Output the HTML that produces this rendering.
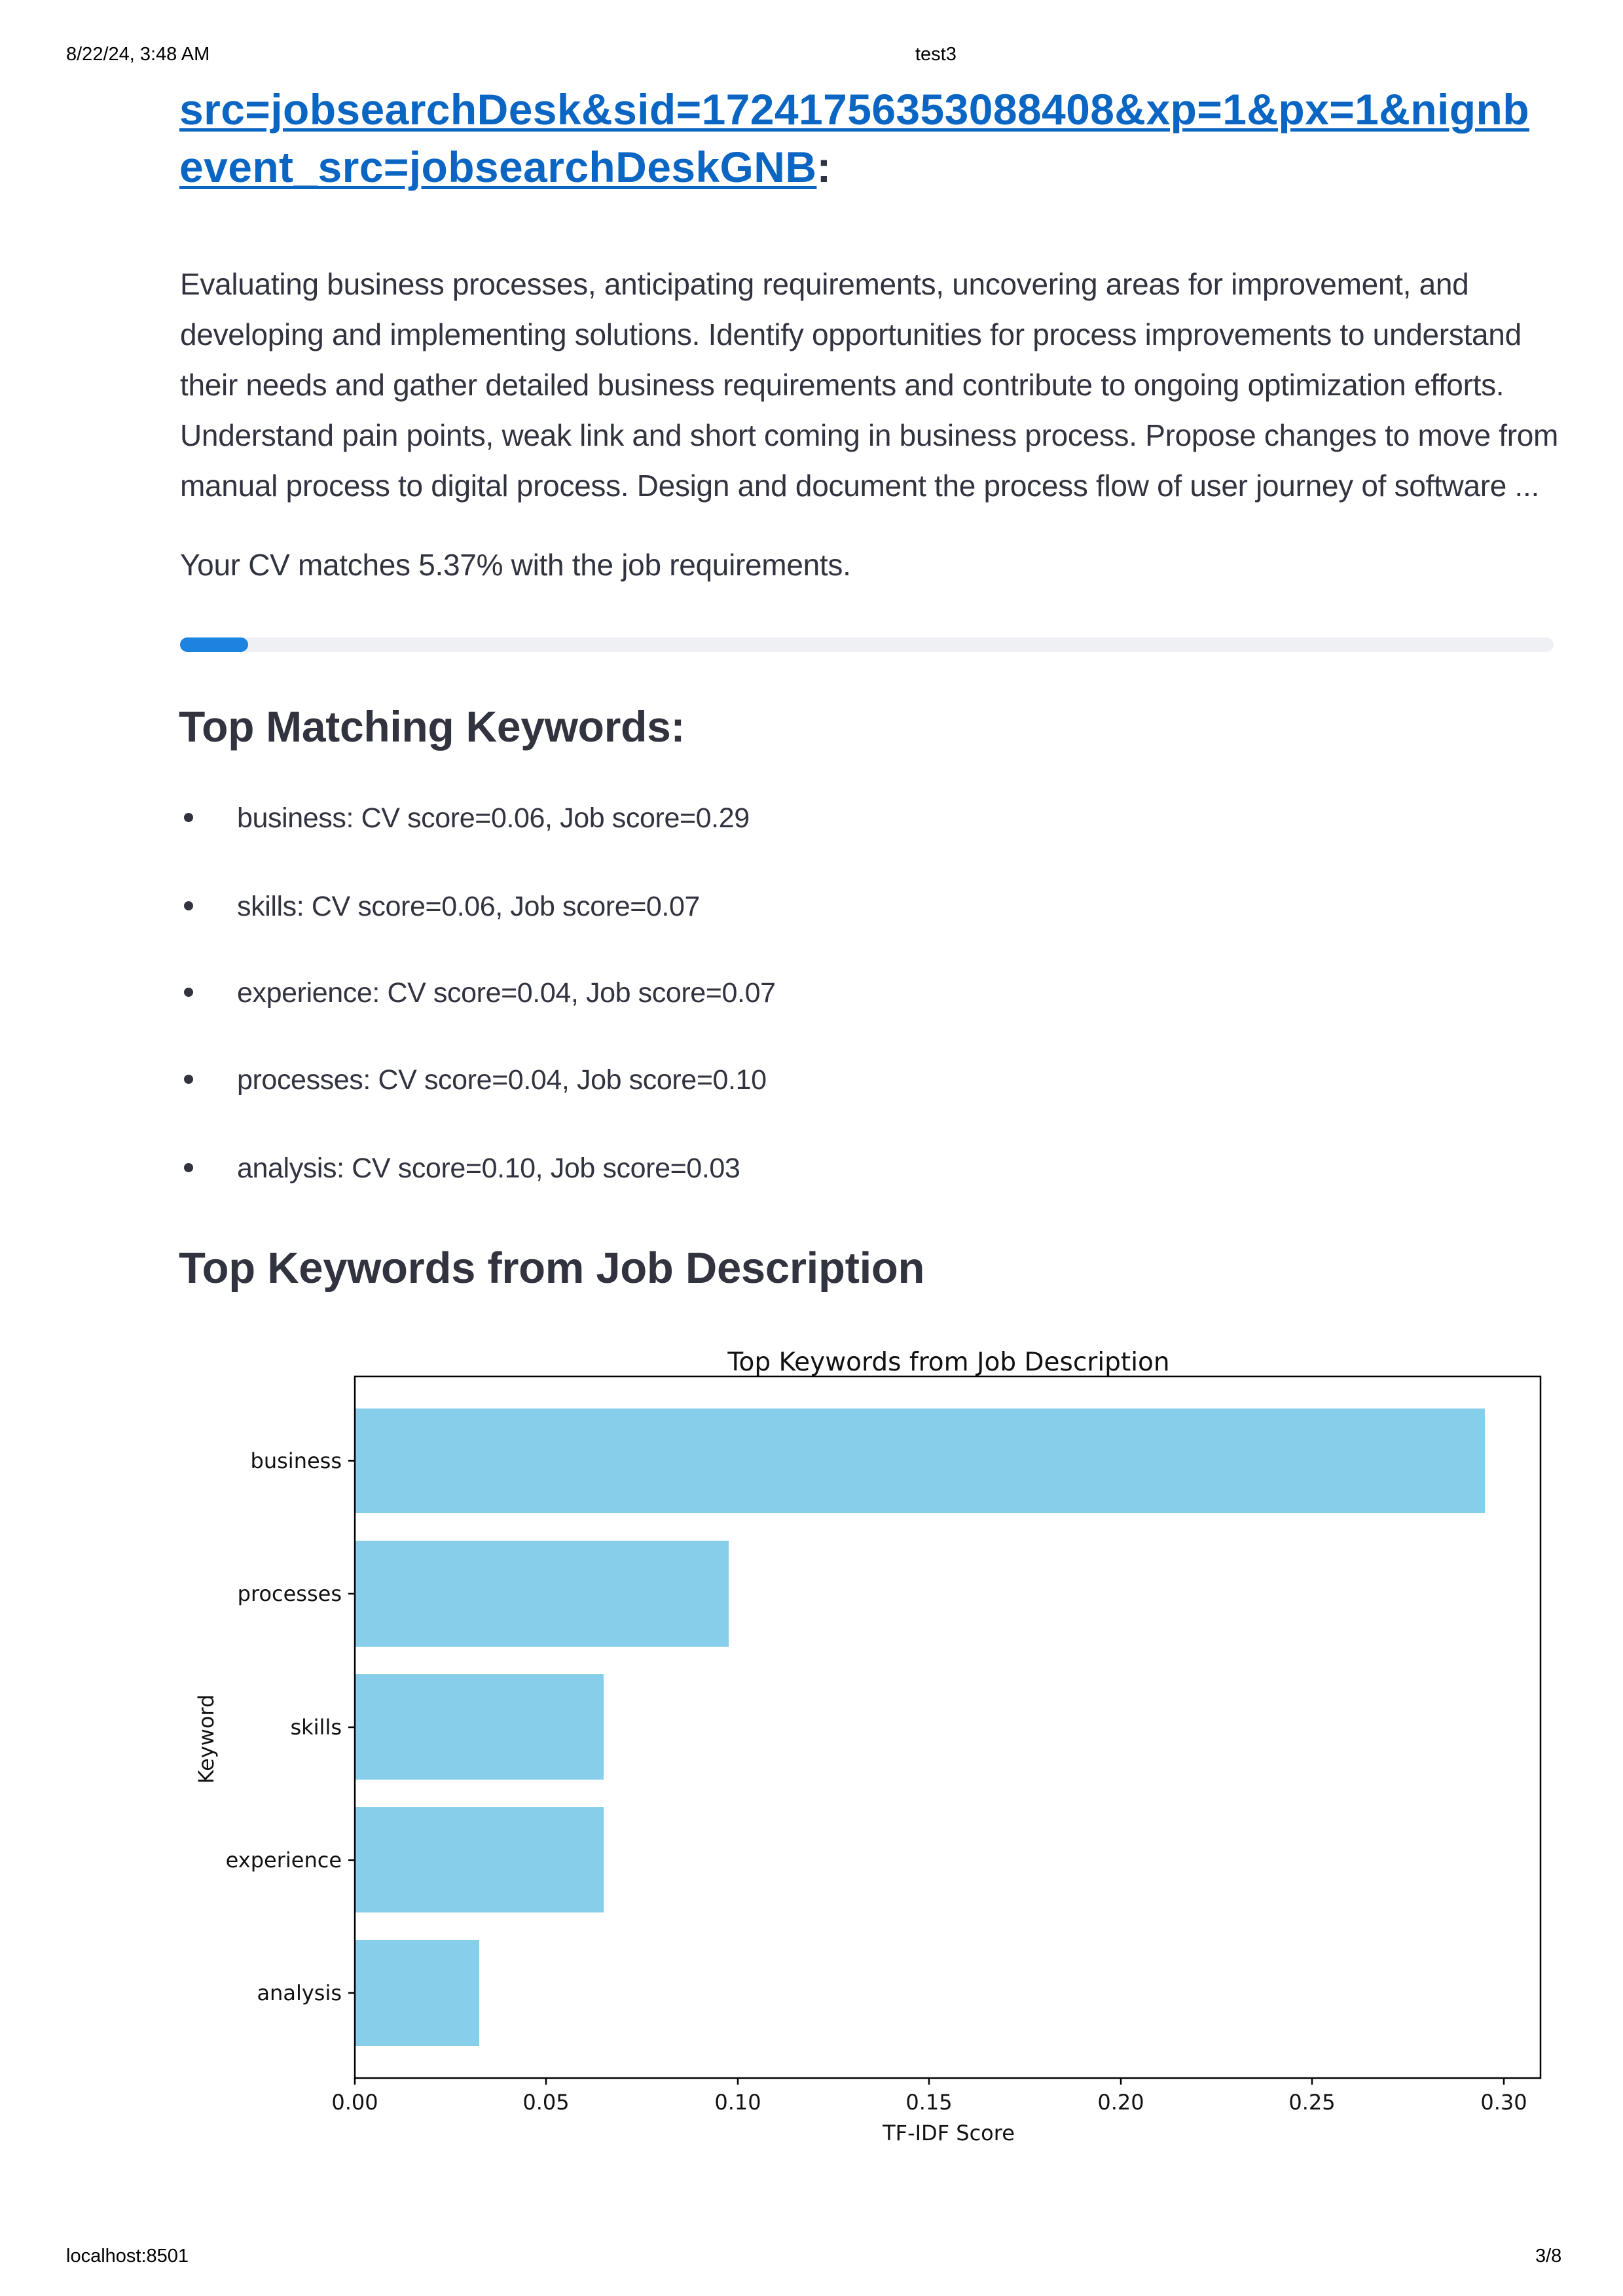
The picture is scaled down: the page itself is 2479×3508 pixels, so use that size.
<!DOCTYPE html>
<html><head><meta charset="utf-8">
<style>
html,body{margin:0;padding:0;background:#fff;}
body{width:2479px;height:3508px;position:relative;overflow:hidden;font-family:"Liberation Sans",sans-serif;color:#31333f;}
.a{position:absolute;white-space:nowrap;}
.hdr{font-size:29px;color:#000;line-height:34px;}
.link{font-size:66px;font-weight:bold;line-height:90px;color:#0b66c3;left:274px;letter-spacing:0.4px;}
.link u{text-decoration-thickness:5px;text-underline-offset:6px;}
.p{font-size:46px;line-height:77px;left:275px;letter-spacing:-0.3px;}
.h{font-size:66px;font-weight:bold;line-height:80px;left:273px;color:#31333f;letter-spacing:-0.3px;}
.li{font-size:43px;line-height:60px;left:362px;letter-spacing:-0.4px;}
.dot{position:absolute;left:281px;width:14px;height:14px;border-radius:50%;background:#31333f;}
</style></head><body>
<div class="a hdr" style="left:101px;top:66px;">8/22/24, 3:48 AM</div>
<div class="a hdr" style="left:1398px;top:66px;">test3</div>
<div class="a hdr" style="left:101px;top:3430px;">localhost:8501</div>
<div class="a hdr" style="left:2345px;top:3430px;">3/8</div>

<div class="a link" style="top:122px;"><u>src=jobsearchDesk&amp;sid=17241756353088408&amp;xp=1&amp;px=1&amp;nignb</u></div>
<div class="a link" style="top:210px;"><u>event_src=jobsearchDeskGNB</u><span style="color:#31333f">:</span></div>

<div class="a p" style="top:396px;">Evaluating business processes, anticipating requirements, uncovering areas for improvement, and</div>
<div class="a p" style="top:473px;">developing and implementing solutions. Identify opportunities for process improvements to understand</div>
<div class="a p" style="top:550px;">their needs and gather detailed business requirements and contribute to ongoing optimization efforts.</div>
<div class="a p" style="top:627px;">Understand pain points, weak link and short coming in business process. Propose changes to move from</div>
<div class="a p" style="top:704px;">manual process to digital process. Design and document the process flow of user journey of software ...</div>
<div class="a p" style="top:825px;">Your CV matches 5.37% with the job requirements.</div>

<div class="a" style="left:275px;top:974px;width:2098px;height:22px;background:#eff0f4;border-radius:11px;"></div>
<div class="a" style="left:275px;top:974px;width:104px;height:22px;background:#1c83e1;border-radius:11px;"></div>

<div class="a h" style="top:1070px;">Top Matching Keywords:</div>

<div class="dot" style="top:1242px;"></div><div class="a li" style="top:1220px;">business: CV score=0.06, Job score=0.29</div>
<div class="dot" style="top:1377px;"></div><div class="a li" style="top:1355px;">skills: CV score=0.06, Job score=0.07</div>
<div class="dot" style="top:1509px;"></div><div class="a li" style="top:1487px;">experience: CV score=0.04, Job score=0.07</div>
<div class="dot" style="top:1642px;"></div><div class="a li" style="top:1620px;">processes: CV score=0.04, Job score=0.10</div>
<div class="dot" style="top:1777px;"></div><div class="a li" style="top:1755px;">analysis: CV score=0.10, Job score=0.03</div>

<div class="a h" style="top:1898px;font-size:67px;">Top Keywords from Job Description</div>

<svg class="a" style="left:0;top:0;" width="2479" height="3508" xmlns="http://www.w3.org/2000/svg">
<g font-family="DejaVu Sans, sans-serif" fill="#000">
<text x="1449" y="2094" font-size="39" text-anchor="middle" fill="#111">Top Keywords from Job Description</text>
<rect x="543" y="2152" width="1725" height="160" fill="#87ceeb"/>
<rect x="543" y="2354" width="570" height="162" fill="#87ceeb"/>
<rect x="543" y="2558" width="379" height="161" fill="#87ceeb"/>
<rect x="543" y="2761" width="379" height="161" fill="#87ceeb"/>
<rect x="543" y="2964" width="189" height="162" fill="#87ceeb"/>
<rect x="542" y="2103" width="1811" height="1072" fill="none" stroke="#000" stroke-width="2.5"/>
<g stroke="#000" stroke-width="2.5">
<line x1="532" y1="2232" x2="542" y2="2232"/>
<line x1="532" y1="2435" x2="542" y2="2435"/>
<line x1="532" y1="2639" x2="542" y2="2639"/>
<line x1="532" y1="2842" x2="542" y2="2842"/>
<line x1="532" y1="3045" x2="542" y2="3045"/>
<line x1="542" y1="3175" x2="542" y2="3185"/>
<line x1="834" y1="3175" x2="834" y2="3185"/>
<line x1="1127" y1="3175" x2="1127" y2="3185"/>
<line x1="1419" y1="3175" x2="1419" y2="3185"/>
<line x1="1712" y1="3175" x2="1712" y2="3185"/>
<line x1="2004" y1="3175" x2="2004" y2="3185"/>
<line x1="2297" y1="3175" x2="2297" y2="3185"/>
</g>
<g font-size="32" text-anchor="end" fill="#111">
<text x="522" y="2243">business</text>
<text x="522" y="2446">processes</text>
<text x="522" y="2650">skills</text>
<text x="522" y="2853">experience</text>
<text x="522" y="3056">analysis</text>
</g>
<g font-size="32" text-anchor="middle" fill="#111">
<text x="542" y="3223">0.00</text>
<text x="834" y="3223">0.05</text>
<text x="1127" y="3223">0.10</text>
<text x="1419" y="3223">0.15</text>
<text x="1712" y="3223">0.20</text>
<text x="2004" y="3223">0.25</text>
<text x="2297" y="3223">0.30</text>
<text x="1449" y="3270">TF-IDF Score</text>
<text transform="translate(326,2657) rotate(-90)">Keyword</text>
</g>
</g>
</svg>
</body></html>
